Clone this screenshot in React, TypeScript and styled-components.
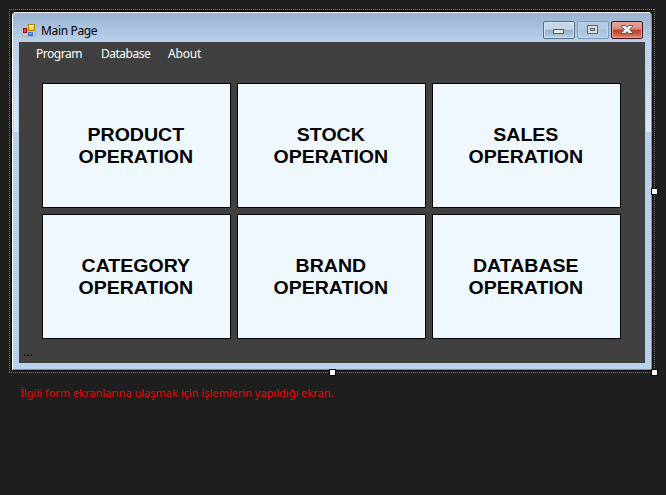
import React from "react";
import styled, { createGlobalStyle } from "styled-components";

const GlobalStyle = createGlobalStyle`
  html, body { margin: 0; width: 666px; height: 495px; overflow: hidden; background: #1e1e1e; }
  * { box-sizing: border-box; }
`;

const Designer = styled.main`
  width: 666px;
  height: 495px;
  padding: 9px;
  background: #1e1e1e;
  font-family: "Noto Sans", "Open Sans", sans-serif;
`;

const Selection = styled.div`
  position: relative;
  width: 646px;
  height: 364px;
  padding: 3px;
  background:
    repeating-linear-gradient(90deg, #777 0 1px, transparent 1px 2px) 0 0 / 100% 1px no-repeat,
    repeating-linear-gradient(90deg, #777 0 1px, transparent 1px 2px) 0 100% / 100% 1px no-repeat,
    repeating-linear-gradient(180deg, #777 0 1px, transparent 1px 2px) 0 0 / 1px 100% no-repeat,
    repeating-linear-gradient(180deg, #777 0 1px, transparent 1px 2px) 100% 0 / 1px 100% no-repeat;
`;

const Handle = styled.span<{ $x: number; $y: number }>`
  position: absolute;
  left: ${(p) => p.$x}px;
  top: ${(p) => p.$y}px;
  width: 5px;
  height: 5px;
  background: #fff;
  box-shadow: 0 0 0 1px #000;
`;

const Window = styled.section`
  width: 640px;
  height: 358px;
  padding: 0 6px 6px;
  border: 1px solid #35b6d0;
  border-top-color: #fff;
  border-left-color: #fff;
  border-radius: 4px 4px 0 0;
  box-shadow: 0 0 0 1px #000;
  background:
    linear-gradient(#b9d1ea, #dde9f7) 1px 29px / 4px 90px no-repeat,
    linear-gradient(#b9d1ea, #dde9f7) 633px 29px / 5px 90px no-repeat,
    linear-gradient(#99b4d1, #b9d1ea 29px, #b9d1ea);
`;

const TitleBar = styled.header`
  display: flex;
  height: 29px;
  padding: 8px 2px 0 3px;
`;

const IconSlot = styled.div`
  padding-top: 2px;
  line-height: 0;
`;

const Title = styled.h1`
  flex: 1;
  margin: 2px 0 0 5px;
  font-size: 12px;
  line-height: 16px;
  font-weight: 400;
  letter-spacing: -0.35px;
  color: #000;
`;

const WindowControls = styled.div`
  display: flex;
  gap: 2px;
`;

const ControlButton = styled.button<{ $kind: "normal" | "disabled" | "close" }>`
  display: block;
  width: 32px;
  height: 18px;
  padding: 0;
  border: 1px solid ${(p) => ({ normal: "#5d6f83", disabled: "#8299b5", close: "#43101c" })[p.$kind]};
  border-radius: 2px;
  box-shadow: inset 0 0 0 1px ${(p) => ({ normal: "#d3e2f1", disabled: "#bdd2e9", close: "#e4a093" })[p.$kind]};
  background: ${(p) =>
    ({
      normal: "linear-gradient(#c5d8e9 0 45%, #98b2cc 50%, #b4cfe8)",
      disabled: "linear-gradient(#b3cae3 0 45%, #a5bfdc 50%, #b5cfeb)",
      close: "linear-gradient(#e8a99c, #d98877 45%, #b7402a 50%, #c15337 70%, #dc9078)",
    })[p.$kind]};
  svg { display: block; }
`;

const Client = styled.div`
  height: 321px;
  background: #404040;
`;

const Menu = styled.nav`
  display: flex;
  height: 24px;
  padding: 4px 0 0 17px;
  gap: 18px;
`;

const MenuItem = styled.span<{ $width: number; $spacing: number }>`
  width: ${(p) => p.$width}px;
  font-size: 12px;
  line-height: 16px;
  letter-spacing: ${(p) => p.$spacing}px;
  color: #fff;
  white-space: nowrap;
`;

const ButtonGrid = styled.div`
  display: grid;
  grid-template-columns: repeat(3, 189px);
  grid-auto-rows: 125px;
  gap: 6px;
  padding: 17px 0 0 23px;
`;

const OperationButton = styled.button`
  display: flex;
  align-items: center;
  justify-content: center;
  padding: 0 2px 0 0;
  border: 1px solid #000;
  border-radius: 0;
  background: #f0f8ff;
  color: #000;
  font: bold 18px/22px "Liberation Sans", Arial, sans-serif;
  white-space: pre-line;
`;

const WideLabel = styled.span`
  transform: scaleX(1.085);
`;

const Status = styled.div`
  padding: 6px 0 0 4px;
  font-size: 12px;
  line-height: 14px;
  color: #000;
`;

const Caption = styled.p`
  margin: 12px 0 0 11px;
  font-size: 11px;
  line-height: 16px;
  color: #f00000;
  white-space: nowrap;
`;

const FormIcon = () => (
  <svg width="14" height="14" viewBox="0 0 14 14" shapeRendering="crispEdges">
    <path d="M.5 4V.5H6M.5 10v3.5H13.5V9" fill="none" stroke="#b3b9c0" />
    <rect x="6.5" y="1.5" width="6" height="6" fill="#ffd44d" stroke="#b98000" />
    <path d="M7 2h5v2H7z" fill="#ffec9c" />
    <rect x="1.5" y="5.5" width="3" height="4" fill="#dd4c3d" stroke="#98140e" />
    <rect x="6" y="9" width="5" height="4" fill="#3c73d6" />
    <path d="M7 10h3v1H7z" fill="#9ac4ff" />
  </svg>
);

const MinimizeIcon = () => (
  <svg width="30" height="16" shapeRendering="crispEdges">
    <rect x="9.5" y="7.5" width="10" height="4" rx="1" fill="#f1eee8" stroke="#535666" />
  </svg>
);

const MaximizeIcon = () => (
  <svg width="30" height="16" shapeRendering="crispEdges">
    <rect x="9.5" y="3.5" width="10" height="8" rx="1" fill="#d8d8d8" stroke="#626777" />
    <rect x="12.5" y="6.5" width="4" height="2" fill="#a8bfda" stroke="#626777" />
  </svg>
);

const CloseIcon = () => (
  <svg width="30" height="16">
    <path d="M9.5 3.5h4L15 5.3l1.5-1.8h4v1.2l-2.8 2.8 2.8 2.8v1.2h-4L15 9.7l-1.5 1.8h-4v-1.2l2.8-2.8-2.8-2.8z" fill="#f4f2ee" stroke="#565260" />
  </svg>
);

const operations = ["PRODUCT", "STOCK", "SALES", "CATEGORY", "BRAND", "DATABASE"];

export default function App() {
  return (
    <Designer>
      <GlobalStyle />
      <Selection>
        <Window>
          <TitleBar>
            <IconSlot><FormIcon /></IconSlot>
            <Title>Main Page</Title>
            <WindowControls>
              <ControlButton $kind="normal" aria-label="Minimize"><MinimizeIcon /></ControlButton>
              <ControlButton $kind="disabled" aria-label="Maximize"><MaximizeIcon /></ControlButton>
              <ControlButton $kind="close" aria-label="Close"><CloseIcon /></ControlButton>
            </WindowControls>
          </TitleBar>
          <Client>
            <Menu>
              <MenuItem $width={47} $spacing={-0.48}>Program</MenuItem>
              <MenuItem $width={49} $spacing={-0.5}>Database</MenuItem>
              <MenuItem $width={34} $spacing={-0.2}>About</MenuItem>
            </Menu>
            <ButtonGrid>
              {operations.map((name) => (
                <OperationButton key={name}><WideLabel>{`${name}\nOPERATION`}</WideLabel></OperationButton>
              ))}
            </ButtonGrid>
            <Status>...</Status>
          </Client>
        </Window>
        <Handle $x={643} $y={180} />
        <Handle $x={321} $y={361} />
        <Handle $x={643} $y={361} />
      </Selection>
      <Caption>İlgili form ekranlarına ulaşmak için işlemlerin yapıldığı ekran.</Caption>
    </Designer>
  );
}
